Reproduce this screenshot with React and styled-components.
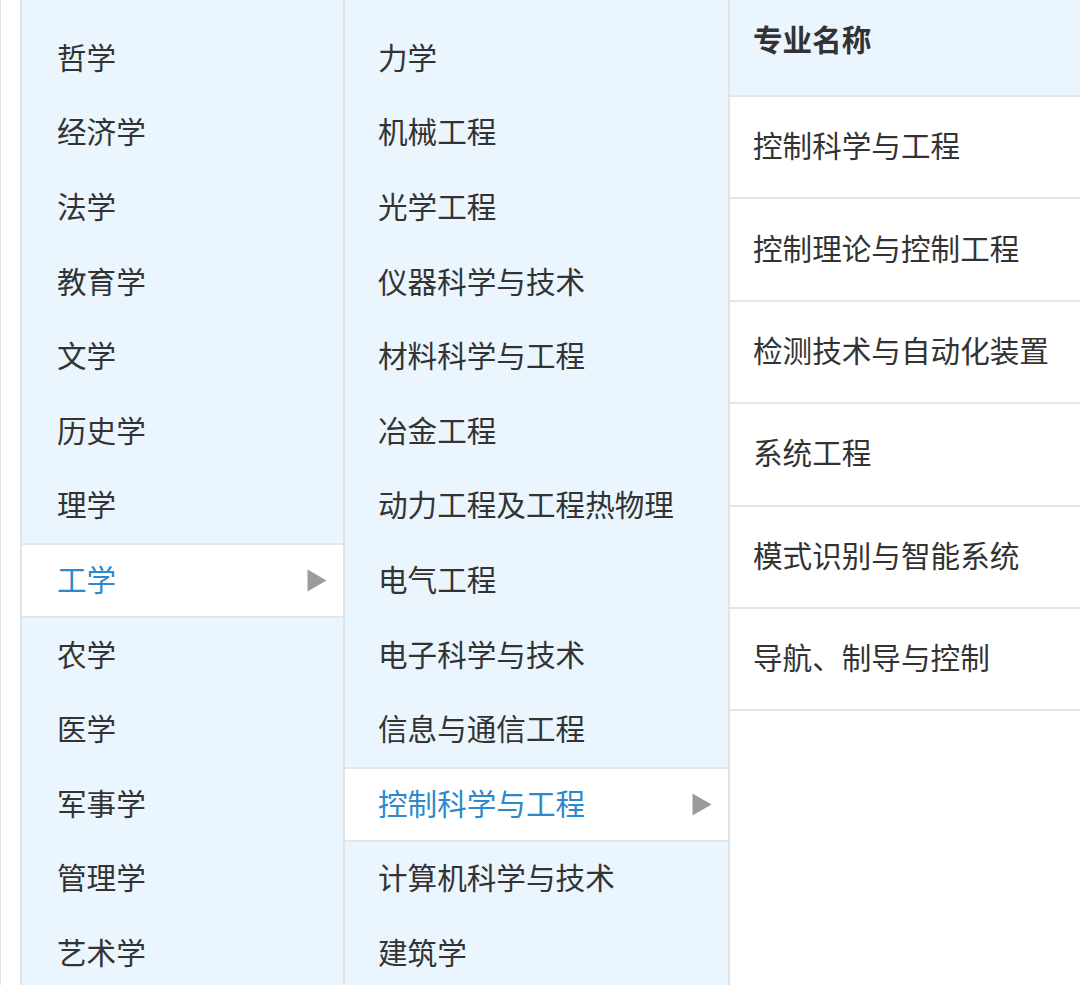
import React from 'react';
import styled, { createGlobalStyle } from 'styled-components';

const GlobalStyle = createGlobalStyle`
  html, body {
    margin: 0;
    padding: 0;
    background: #ffffff;
  }
  body {
    font-family: "Noto Sans CJK SC", "Noto Sans", sans-serif;
  }
`;

const categories = ["哲学", "经济学", "法学", "教育学", "文学", "历史学", "理学", "工学", "农学", "医学", "军事学", "管理学", "艺术学"];
const subjects = ["力学", "机械工程", "光学工程", "仪器科学与技术", "材料科学与工程", "冶金工程", "动力工程及工程热物理", "电气工程", "电子科学与技术", "信息与通信工程", "控制科学与工程", "计算机科学与技术", "建筑学"];
const majors = ["控制科学与工程", "控制理论与控制工程", "检测技术与自动化装置", "系统工程", "模式识别与智能系统", "导航、制导与控制"];

const Page = styled.div`
  display: flex;
  width: 1080px;
  height: 985px;
  overflow: hidden;
  background: #ffffff;
`;

const Gutter = styled.div`
  width: 20px;
  flex-shrink: 0;
  border-left: 1px solid #e2e2e2;
  box-sizing: border-box;
`;

const Column = styled.div`
  box-sizing: border-box;
  flex-shrink: 0;
  width: ${p => p.$width}px;
  background: #eaf5fd;
  border-left: ${p => (p.$leftBorder ? '2px solid #e1e4e7' : 'none')};
  border-right: 2px solid #e1e4e7;
  padding-top: 21px;
  display: flex;
  flex-direction: column;
`;

const Item = styled.div`
  box-sizing: border-box;
  height: 74.6px;
  flex-shrink: 0;
  display: flex;
  align-items: center;
  justify-content: space-between;
  padding: 0 16px 4px ${p => p.$indent}px;
  font-size: 29.6px;
  color: ${p => (p.$active ? '#2f87cc' : '#333333')};
  background: ${p => (p.$active ? '#ffffff' : 'transparent')};
  border-top: 2px solid ${p => (p.$active ? '#e4e6e8' : 'transparent')};
  border-bottom: 2px solid ${p => (p.$active ? '#e4e6e8' : 'transparent')};
  white-space: nowrap;

  svg {
    margin-top: 4px;
  }
`;

const Arrow = () => (
  <svg width="20" height="23" viewBox="0 0 20 23">
    <polygon points="0.5,0.5 19.5,11.5 0.5,22.5" fill="#9b9b9b" />
  </svg>
);

const Majors = styled.div`
  flex: 1;
  display: flex;
  flex-direction: column;
  background: #ffffff;
`;

const Header = styled.div`
  box-sizing: border-box;
  height: 97px;
  background: #eaf5fd;
  border-bottom: 2px solid #e4e6e8;
  padding: 21px 0 0 23px;
  font-size: 29.6px;
  line-height: 36px;
  font-weight: 700;
  color: #333333;
`;

const MajorRow = styled.div`
  box-sizing: border-box;
  height: 102.4px;
  display: flex;
  align-items: center;
  padding: 0 0 5px 23px;
  font-size: 29.6px;
  color: #333333;
  border-bottom: 2px solid #e4e6e8;
  white-space: nowrap;
`;

export default function App() {
  return (
    <>
      <GlobalStyle />
      <Page>
        <Gutter />
        <Column $width={325} $leftBorder>
          {categories.map(c => (
            <Item key={c} $indent={35} $active={c === "工学"}>
              <span>{c}</span>
              {c === "工学" && <Arrow />}
            </Item>
          ))}
        </Column>
        <Column $width={385}>
          {subjects.map(s => (
            <Item key={s} $indent={33} $active={s === "控制科学与工程"}>
              <span>{s}</span>
              {s === "控制科学与工程" && <Arrow />}
            </Item>
          ))}
        </Column>
        <Majors>
          <Header>专业名称</Header>
          {majors.map(m => (
            <MajorRow key={m}>{m}</MajorRow>
          ))}
        </Majors>
      </Page>
    </>
  );
}
